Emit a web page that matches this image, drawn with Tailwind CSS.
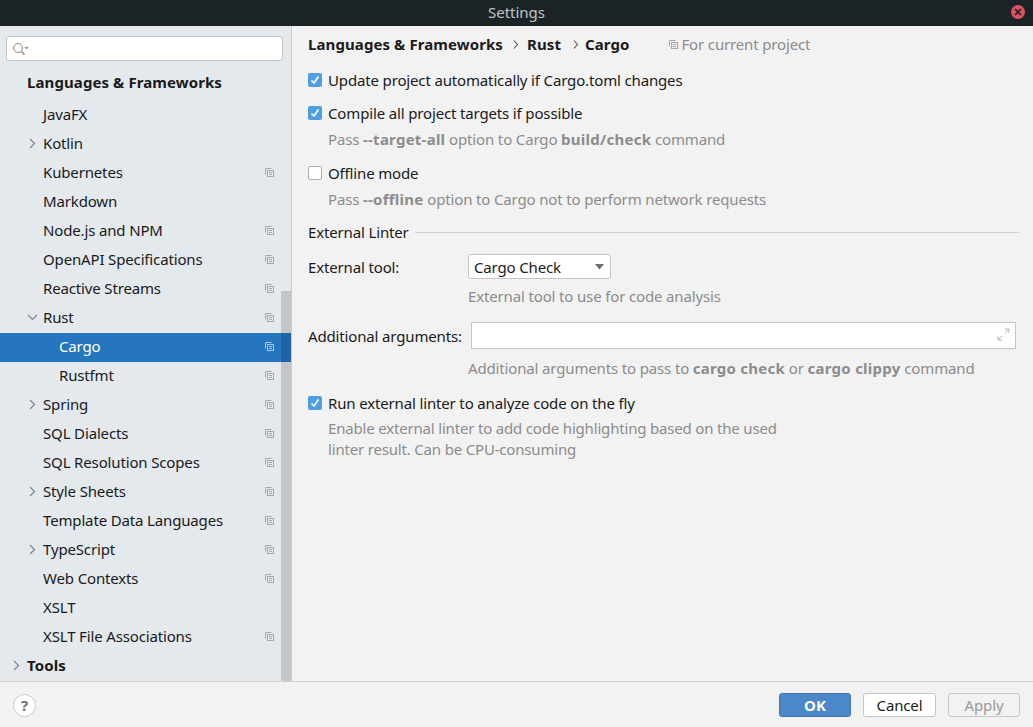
<!DOCTYPE html>
<html lang="en">
<head>
<meta charset="UTF-8">
<title>Settings</title>
<script src="https://cdn.jsdelivr.net/npm/@tailwindcss/browser@4"></script>
</head>
<body class="w-[1033px] h-[727px] overflow-hidden bg-[#f2f2f2] font-['Noto_Sans',sans-serif] text-[15px] leading-[20px] tracking-[-0.15px] text-[#1a1a1a]">

<!-- title bar -->
<div class="relative h-[26px] bg-[#1c2326] flex items-center justify-center pb-[2px] text-[#bfc4c6] tracking-normal">
  <span>Settings</span>
  <div class="absolute right-[8px] top-[5px] w-[14px] h-[14px] rounded-full bg-[#d9525f] flex items-center justify-center">
    <svg width="8" height="8" viewBox="0 0 8 8"><path d="M1 1l6 6M7 1L1 7" stroke="#2a1f22" stroke-width="1.6"/></svg>
  </div>
</div>

<div class="flex h-[655px]">
  <!-- sidebar -->
  <div class="relative w-[292px] shrink-0 bg-[#e4e9ee] border-r border-[#c9ccd0]">
    <div class="px-[6px] pt-[10px] w-[289px]">
      <div class="h-[25px] bg-white border border-[#c4c4c4] rounded-[3px] flex items-center pl-[5px]">
        <svg width="17" height="14" viewBox="0 0 17 14" fill="none">
          <circle cx="6" cy="6" r="4.5" stroke="#8c8c8c" stroke-width="1"/>
          <path d="M9.5 9.5l3 3" stroke="#8c8c8c" stroke-width="1.6"/>
          <path d="M12.5 5h4l-2 2.5z" fill="#8c8c8c"/>
        </svg>
      </div>
    </div>
    <div class="mt-[8px]">
      <div class="h-[29px] mb-[3px] pb-[4px] flex items-center pl-[27px] font-bold tracking-[0.09px]">Languages &amp; Frameworks</div>

      <div class="h-[29px] pb-[4px] flex items-center pl-[43px] pr-[17px]"><span class="flex-1">JavaFX</span></div>
      <div class="relative h-[29px] pb-[4px] flex items-center pl-[43px] pr-[17px]">
        <svg class="absolute left-[29px] top-[8px]" width="7" height="11" viewBox="0 0 7 11" fill="none"><path d="M1 1l4.5 4.5L1 10" stroke="#7f8389" stroke-width="1.2"/></svg>
        <span class="flex-1">Kotlin</span>
      </div>
      <div class="h-[29px] pb-[4px] flex items-center pl-[43px] pr-[17px]"><span class="flex-1">Kubernetes</span>
        <svg class="mt-[2px]" width="9" height="9" viewBox="0 0 9 9" fill="none" stroke="#a3a8ae"><path d="M.5 6.5V.5h6"/><rect x="2.5" y="2.5" width="6" height="6"/><path d="M4 4.5h3M4 6.5h3"/></svg>
      </div>
      <div class="h-[29px] pb-[4px] flex items-center pl-[43px] pr-[17px]"><span class="flex-1">Markdown</span></div>
      <div class="h-[29px] pb-[4px] flex items-center pl-[43px] pr-[17px]"><span class="flex-1">Node.js and NPM</span>
        <svg class="mt-[2px]" width="9" height="9" viewBox="0 0 9 9" fill="none" stroke="#a3a8ae"><path d="M.5 6.5V.5h6"/><rect x="2.5" y="2.5" width="6" height="6"/><path d="M4 4.5h3M4 6.5h3"/></svg>
      </div>
      <div class="h-[29px] pb-[4px] flex items-center pl-[43px] pr-[17px]"><span class="flex-1">OpenAPI Specifications</span>
        <svg class="mt-[2px]" width="9" height="9" viewBox="0 0 9 9" fill="none" stroke="#a3a8ae"><path d="M.5 6.5V.5h6"/><rect x="2.5" y="2.5" width="6" height="6"/><path d="M4 4.5h3M4 6.5h3"/></svg>
      </div>
      <div class="h-[29px] pb-[4px] flex items-center pl-[43px] pr-[17px]"><span class="flex-1">Reactive Streams</span>
        <svg class="mt-[2px]" width="9" height="9" viewBox="0 0 9 9" fill="none" stroke="#a3a8ae"><path d="M.5 6.5V.5h6"/><rect x="2.5" y="2.5" width="6" height="6"/><path d="M4 4.5h3M4 6.5h3"/></svg>
      </div>
      <div class="relative h-[29px] pb-[4px] flex items-center pl-[43px] pr-[17px]">
        <svg class="absolute left-[27px] top-[10px]" width="11" height="7" viewBox="0 0 11 7" fill="none"><path d="M1 1l4.5 4.5L10 1" stroke="#7f8389" stroke-width="1.2"/></svg>
        <span class="flex-1">Rust</span>
        <svg class="mt-[2px]" width="9" height="9" viewBox="0 0 9 9" fill="none" stroke="#a3a8ae"><path d="M.5 6.5V.5h6"/><rect x="2.5" y="2.5" width="6" height="6"/><path d="M4 4.5h3M4 6.5h3"/></svg>
      </div>
      <div class="h-[29px] pb-[4px] flex items-center pl-[59px] pr-[17px] bg-[#2675bf] text-white"><span class="flex-1">Cargo</span>
        <svg class="mt-[2px]" width="9" height="9" viewBox="0 0 9 9" fill="none" stroke="#a9c8e6"><path d="M.5 6.5V.5h6"/><rect x="2.5" y="2.5" width="6" height="6"/><path d="M4 4.5h3M4 6.5h3"/></svg>
      </div>
      <div class="h-[29px] pb-[4px] flex items-center pl-[59px] pr-[17px]"><span class="flex-1">Rustfmt</span>
        <svg class="mt-[2px]" width="9" height="9" viewBox="0 0 9 9" fill="none" stroke="#a3a8ae"><path d="M.5 6.5V.5h6"/><rect x="2.5" y="2.5" width="6" height="6"/><path d="M4 4.5h3M4 6.5h3"/></svg>
      </div>
      <div class="relative h-[29px] pb-[4px] flex items-center pl-[43px] pr-[17px]">
        <svg class="absolute left-[29px] top-[8px]" width="7" height="11" viewBox="0 0 7 11" fill="none"><path d="M1 1l4.5 4.5L1 10" stroke="#7f8389" stroke-width="1.2"/></svg>
        <span class="flex-1">Spring</span>
        <svg class="mt-[2px]" width="9" height="9" viewBox="0 0 9 9" fill="none" stroke="#a3a8ae"><path d="M.5 6.5V.5h6"/><rect x="2.5" y="2.5" width="6" height="6"/><path d="M4 4.5h3M4 6.5h3"/></svg>
      </div>
      <div class="h-[29px] pb-[4px] flex items-center pl-[43px] pr-[17px]"><span class="flex-1">SQL Dialects</span>
        <svg class="mt-[2px]" width="9" height="9" viewBox="0 0 9 9" fill="none" stroke="#a3a8ae"><path d="M.5 6.5V.5h6"/><rect x="2.5" y="2.5" width="6" height="6"/><path d="M4 4.5h3M4 6.5h3"/></svg>
      </div>
      <div class="h-[29px] pb-[4px] flex items-center pl-[43px] pr-[17px]"><span class="flex-1">SQL Resolution Scopes</span>
        <svg class="mt-[2px]" width="9" height="9" viewBox="0 0 9 9" fill="none" stroke="#a3a8ae"><path d="M.5 6.5V.5h6"/><rect x="2.5" y="2.5" width="6" height="6"/><path d="M4 4.5h3M4 6.5h3"/></svg>
      </div>
      <div class="relative h-[29px] pb-[4px] flex items-center pl-[43px] pr-[17px]">
        <svg class="absolute left-[29px] top-[8px]" width="7" height="11" viewBox="0 0 7 11" fill="none"><path d="M1 1l4.5 4.5L1 10" stroke="#7f8389" stroke-width="1.2"/></svg>
        <span class="flex-1">Style Sheets</span>
        <svg class="mt-[2px]" width="9" height="9" viewBox="0 0 9 9" fill="none" stroke="#a3a8ae"><path d="M.5 6.5V.5h6"/><rect x="2.5" y="2.5" width="6" height="6"/><path d="M4 4.5h3M4 6.5h3"/></svg>
      </div>
      <div class="h-[29px] pb-[4px] flex items-center pl-[43px] pr-[17px]"><span class="flex-1">Template Data Languages</span>
        <svg class="mt-[2px]" width="9" height="9" viewBox="0 0 9 9" fill="none" stroke="#a3a8ae"><path d="M.5 6.5V.5h6"/><rect x="2.5" y="2.5" width="6" height="6"/><path d="M4 4.5h3M4 6.5h3"/></svg>
      </div>
      <div class="relative h-[29px] pb-[4px] flex items-center pl-[43px] pr-[17px]">
        <svg class="absolute left-[29px] top-[8px]" width="7" height="11" viewBox="0 0 7 11" fill="none"><path d="M1 1l4.5 4.5L1 10" stroke="#7f8389" stroke-width="1.2"/></svg>
        <span class="flex-1">TypeScript</span>
        <svg class="mt-[2px]" width="9" height="9" viewBox="0 0 9 9" fill="none" stroke="#a3a8ae"><path d="M.5 6.5V.5h6"/><rect x="2.5" y="2.5" width="6" height="6"/><path d="M4 4.5h3M4 6.5h3"/></svg>
      </div>
      <div class="h-[29px] pb-[4px] flex items-center pl-[43px] pr-[17px]"><span class="flex-1">Web Contexts</span>
        <svg class="mt-[2px]" width="9" height="9" viewBox="0 0 9 9" fill="none" stroke="#a3a8ae"><path d="M.5 6.5V.5h6"/><rect x="2.5" y="2.5" width="6" height="6"/><path d="M4 4.5h3M4 6.5h3"/></svg>
      </div>
      <div class="h-[29px] pb-[4px] flex items-center pl-[43px] pr-[17px]"><span class="flex-1">XSLT</span></div>
      <div class="h-[29px] pb-[4px] flex items-center pl-[43px] pr-[17px]"><span class="flex-1">XSLT File Associations</span>
        <svg class="mt-[2px]" width="9" height="9" viewBox="0 0 9 9" fill="none" stroke="#a3a8ae"><path d="M.5 6.5V.5h6"/><rect x="2.5" y="2.5" width="6" height="6"/><path d="M4 4.5h3M4 6.5h3"/></svg>
      </div>
      <div class="relative h-[29px] pb-[4px] flex items-center pl-[27px] font-bold tracking-[0.09px]">
        <svg class="absolute left-[13px] top-[8px]" width="7" height="11" viewBox="0 0 7 11" fill="none"><path d="M1 1l4.5 4.5L1 10" stroke="#7f8389" stroke-width="1.2"/></svg>
        Tools
      </div>
    </div>
    <!-- scrollbar overlay -->
    <div class="absolute right-0 top-[265px] bottom-0 w-[10px] bg-black/15"></div>
  </div>

  <!-- content -->
  <div class="flex-1 pl-[16px] pr-[14px]">
    <div class="h-[36px] flex items-center font-bold tracking-[0.09px]">
      <span>Languages &amp; Frameworks</span>
      <svg class="ml-[10px]" width="6" height="9" viewBox="0 0 6 9" fill="none"><path d="M1 .5l3.5 4-3.5 4" stroke="#555" stroke-width="1.1"/></svg>
      <span class="ml-[8px]">Rust</span>
      <svg class="ml-[12px]" width="6" height="9" viewBox="0 0 6 9" fill="none"><path d="M1 .5l3.5 4-3.5 4" stroke="#555" stroke-width="1.1"/></svg>
      <span class="ml-[6px]">Cargo</span>
      <svg class="ml-[40px]" width="9" height="9" viewBox="0 0 9 9" fill="none" stroke="#a3a8ae"><path d="M.5 6.5V.5h6"/><rect x="2.5" y="2.5" width="6" height="6"/><path d="M4 4.5h3M4 6.5h3"/></svg>
      <span class="ml-[3px] font-normal tracking-[-0.15px] text-[#8c8c8c]">For current project</span>
    </div>

    <div class="mt-[8px] h-[20px] flex items-center gap-[6px]">
      <span class="w-[14px] h-[14px] rounded-[2px] bg-[#4f9ee3] flex items-center justify-center">
        <svg width="10" height="10" viewBox="0 0 10 10" fill="none"><path d="M1.5 5.5l2.5 2.5 4.5-6.5" stroke="#fff" stroke-width="1.7"/></svg>
      </span>
      <span>Update project automatically if Cargo.toml changes</span>
    </div>

    <div class="mt-[13px] h-[20px] flex items-center gap-[6px]">
      <span class="w-[14px] h-[14px] rounded-[2px] bg-[#4f9ee3] flex items-center justify-center">
        <svg width="10" height="10" viewBox="0 0 10 10" fill="none"><path d="M1.5 5.5l2.5 2.5 4.5-6.5" stroke="#fff" stroke-width="1.7"/></svg>
      </span>
      <span>Compile all project targets if possible</span>
    </div>
    <div class="mt-[6px] pl-[20px] text-[#8c8c8c]">Pass <b class="tracking-[0.25px]">--target-all</b> option to Cargo <b class="tracking-[0.25px]">build/check</b> command</div>

    <div class="mt-[14px] h-[20px] flex items-center gap-[6px]">
      <span class="w-[14px] h-[14px] rounded-[2px] bg-white border border-[#b0b0b0]"></span>
      <span>Offline mode</span>
    </div>
    <div class="mt-[6px] pl-[20px] text-[#8c8c8c]">Pass <b class="tracking-[0.25px]">--offline</b> option to Cargo not to perform network requests</div>

    <div class="mt-[13px] h-[20px] flex items-center gap-[6px]">
      <span>External Linter</span>
      <div class="flex-1 h-px bg-[#d1d1d1]"></div>
    </div>

    <div class="mt-[12px] h-[25px] flex items-center">
      <span class="w-[160px]">External tool:</span>
      <div class="relative w-[143px] h-[25px] bg-white border border-[#c4c4c4] rounded-[3px] flex items-center pl-[5px]">
        Cargo Check
        <svg class="absolute right-[4px] top-[9px]" width="12" height="6" viewBox="0 0 12 6"><path d="M1 0h9L5.5 5.5z" fill="#6e6e6e"/></svg>
      </div>
    </div>
    <div class="mt-[7px] pl-[160px] text-[#8c8c8c]">External tool to use for code analysis</div>

    <div class="mt-[16px] h-[27px] flex items-center">
      <span class="w-[163px]">Additional arguments:</span>
      <div class="relative w-[545px] h-[27px] bg-white border border-[#c4c4c4]">
        <svg class="absolute right-[5px] top-[5px]" width="13" height="13" viewBox="0 0 13 13" fill="none" stroke="#b0b4b8"><path d="M8 1h4v4M12 1L8 5M5 12H1V8M1 12l4-4"/></svg>
      </div>
    </div>
    <div class="mt-[9px] pl-[160px] text-[#8c8c8c]">Additional arguments to pass to <b class="tracking-[0.25px]">cargo check</b> or <b class="tracking-[0.25px]">cargo clippy</b> command</div>

    <div class="mt-[15px] h-[20px] flex items-center gap-[6px]">
      <span class="w-[14px] h-[14px] rounded-[2px] bg-[#4f9ee3] flex items-center justify-center">
        <svg width="10" height="10" viewBox="0 0 10 10" fill="none"><path d="M1.5 5.5l2.5 2.5 4.5-6.5" stroke="#fff" stroke-width="1.7"/></svg>
      </span>
      <span>Run external linter to analyze code on the fly</span>
    </div>
    <div class="mt-[5px] pl-[20px] text-[#8c8c8c] leading-[21px] tracking-[-0.18px]">Enable external linter to add code highlighting based on the used<br>linter result. Can be CPU-consuming</div>
  </div>
</div>

<!-- footer -->
<div class="h-[46px] pt-[1px] border-t border-[#d1d1d1] flex items-center pl-[13px] pr-[13px]">
  <div class="w-[23px] h-[23px] rounded-full bg-white border border-[#c9c9c9] flex items-center justify-center font-bold text-[#6e6e6e]">?</div>
  <div class="flex-1"></div>
  <div class="w-[72px] h-[24px] rounded-[3px] bg-[#4c87c8] border border-[#3f79b8] text-white font-bold tracking-normal flex items-center justify-center">OK</div>
  <div class="ml-[12px] w-[73px] h-[24px] rounded-[3px] bg-white border border-[#c4c4c4] flex items-center justify-center">Cancel</div>
  <div class="ml-[12px] w-[72px] h-[24px] rounded-[3px] border border-[#c9c9c9] text-[#9a9a9a] flex items-center justify-center">Apply</div>
</div>

</body>
</html>
